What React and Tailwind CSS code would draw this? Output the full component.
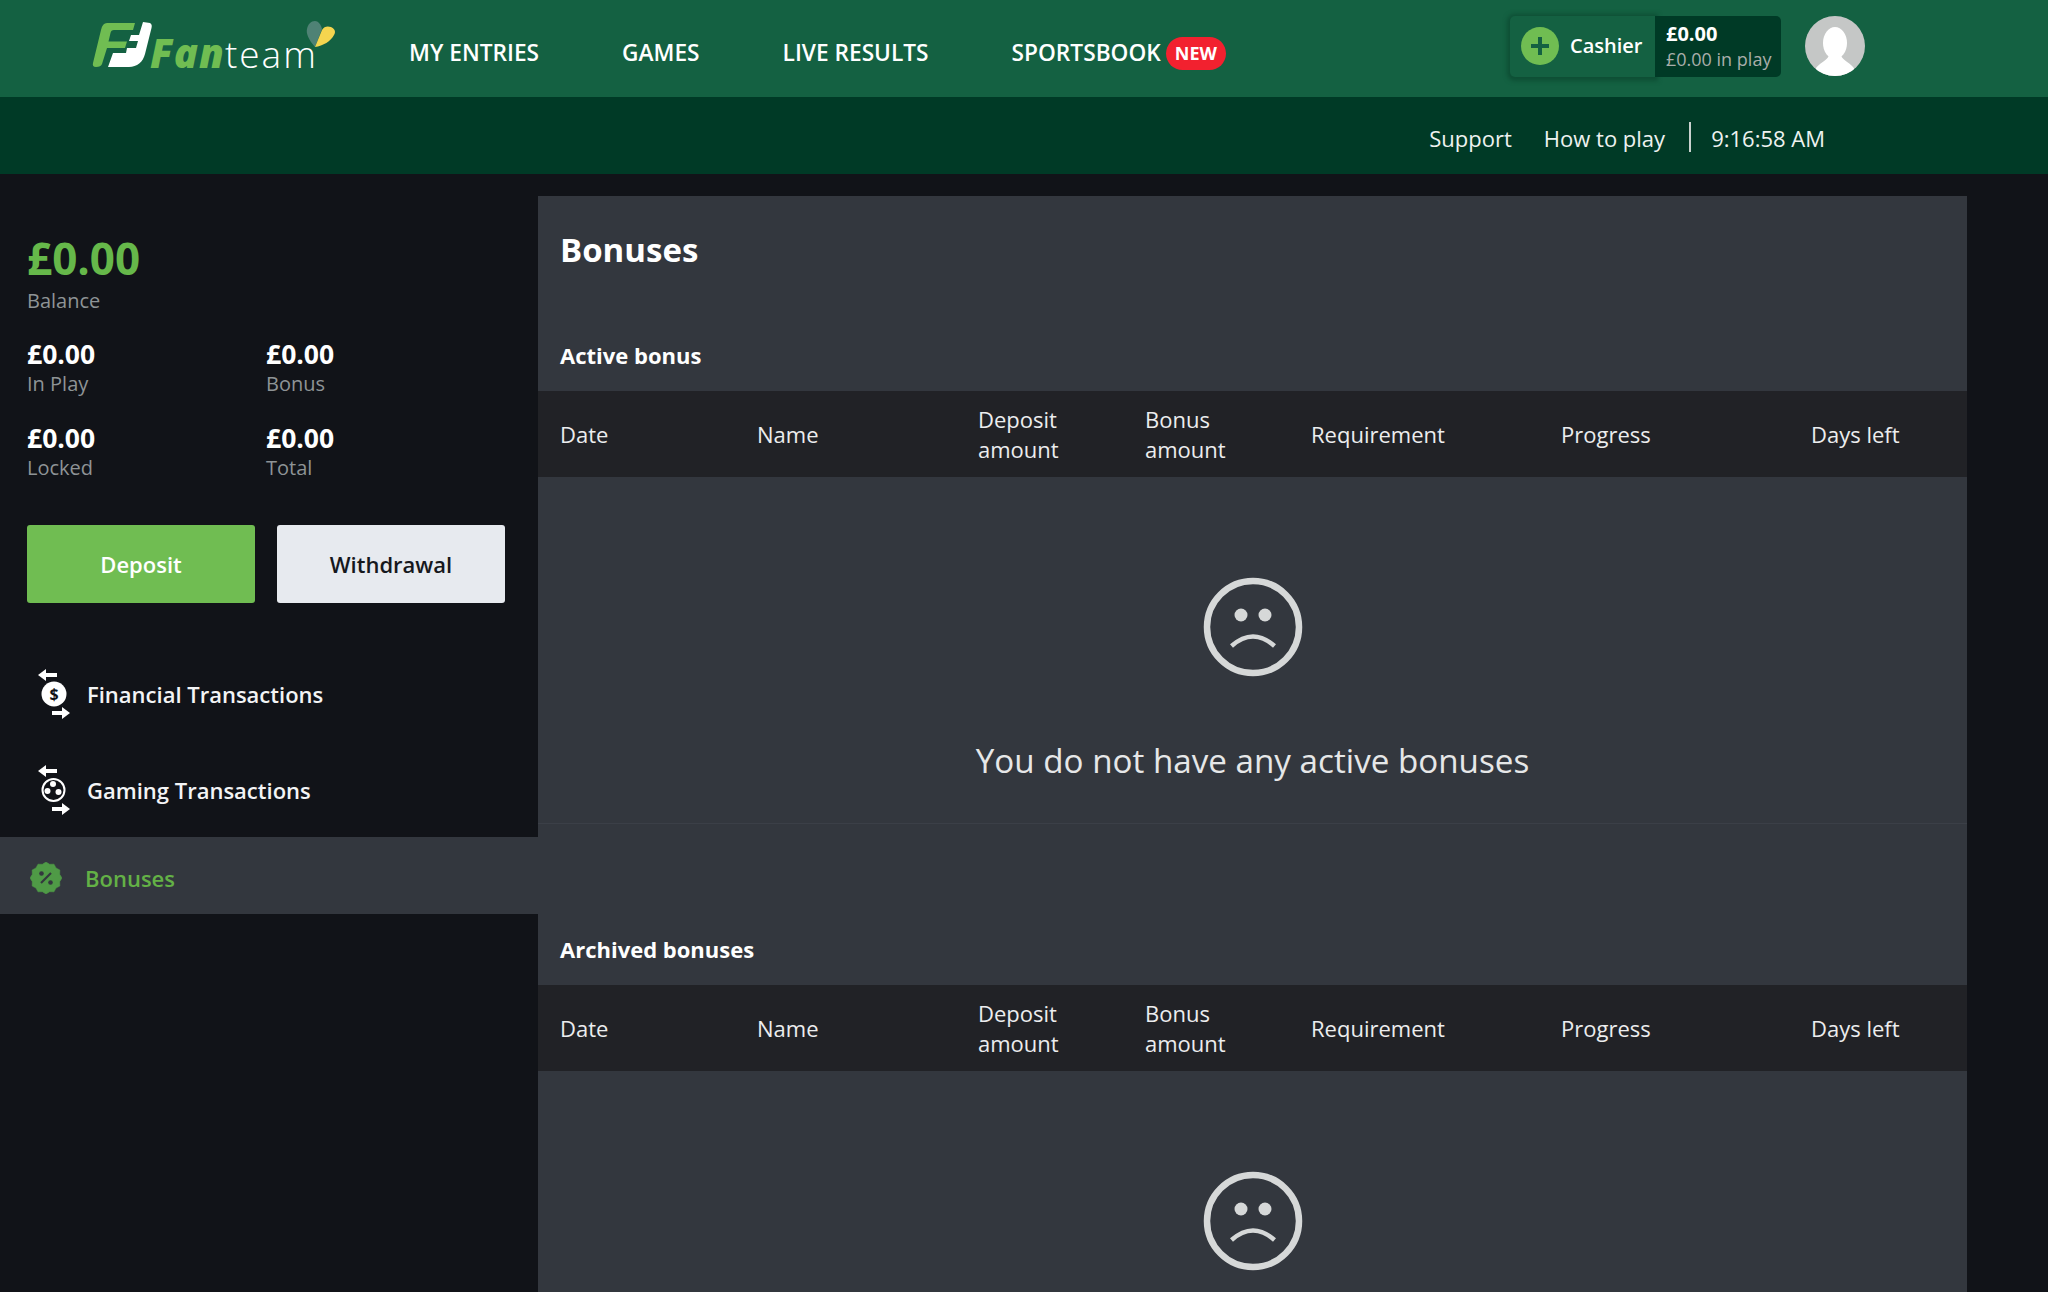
import React from "react";

const COLS = [
  ["Date", "w-[197px]"],
  ["Name", "w-[221px]"],
  ["Deposit amount", "w-[167px]"],
  ["Bonus amount", "w-[166px]"],
  ["Requirement", "w-[250px]"],
  ["Progress", "w-[250px]"],
  ["Days left", "flex-1"],
];

function Logo() {
  return (
    <div className="relative w-[243px] h-[47px] shrink-0">
      <svg className="absolute left-0 top-0" width="243" height="47" viewBox="0 0 243 47">
        <path d="M15 2L43 2L41 9L22 9Q19 9 18.500 12L16.500 20.500L35 20.500L33 27L15 27L10 43Q9 46 4 46Q0 46 1 42L9 9Q10.500 2 15 2Z" fill="#70bd52" />
        <path d="M51 1L58 2C60 3 60 5 59.500 7L53 33C51 41 45 46 37 46L16 46L21 32L34 32L35 27L44 27L46 20L37 20L39 14L47 14Z" fill="#fff" />
        <path d="M223 26C216 18 214 12 215 8C216 3 219 0 223 0C226 0 229 3 230 8Z" fill="#4f8275" />
        <path d="M223 26L230 9C232 5 236 5 239 6C243 8 244 11 242 14C239 20 231 25 223 26Z" fill="#f5d54f" />
      </svg>
      <div className="absolute left-[58px] top-[10px] flex items-baseline leading-[44px]">
        <span className="text-[40px] font-extrabold italic text-[#70bd52] tracking-[1px]">Fan</span>
        <span className="text-[37px] font-light text-white tracking-[2px]">team</span>
      </div>
    </div>
  );
}

function Arrows({ children }) {
  return (
    <svg width="34" height="50" viewBox="0 0 34 50" className="shrink-0">
      <path d="M0 6L8 0V4H19V8H8V12Z" fill="#fff" />
      <path d="M32 44L24 38V42H14V46H24V50Z" fill="#fff" />
      {children}
    </svg>
  );
}

function DollarIcon() {
  return (
    <Arrows>
      <circle cx="16" cy="25" r="12.500" fill="#fff" />
      <text x="16" y="31" textAnchor="middle" fontSize="16" fontWeight="700" fill="#111318" fontFamily="'Open Sans',sans-serif">$</text>
    </Arrows>
  );
}

function BallIcon() {
  return (
    <Arrows>
      <circle cx="15.500" cy="25" r="11" fill="none" stroke="#fff" strokeWidth="2" />
      <circle cx="15" cy="19" r="3" fill="#fff" />
      <circle cx="9.500" cy="26" r="3" fill="#fff" />
      <circle cx="20.500" cy="27" r="3" fill="#fff" />
    </Arrows>
  );
}

function BadgeIcon() {
  const pts = [];
  const n = 24;
  for (let i = 0; i < n; i++) {
    const a = (i / n) * Math.PI * 2;
    const r = i % 2 === 0 ? 16 : 14.2;
    pts.push(`${16 + r * Math.cos(a)},${16 + r * Math.sin(a)}`);
  }
  return (
    <svg width="32" height="32" viewBox="0 0 32 32" className="shrink-0">
      <polygon points={pts.join(" ")} fill="#4f9a46" stroke="#4f9a46" strokeWidth="0.500" strokeLinejoin="round" />
      <path d="M21 11L11 21" stroke="#33373e" strokeWidth="2.200" />
      <circle cx="11.500" cy="11.500" r="2.300" fill="#33373e" />
      <circle cx="20.500" cy="20.500" r="2.300" fill="#33373e" />
    </svg>
  );
}

function SadFace() {
  return (
    <svg width="100" height="100" viewBox="0 0 100 100" className="shrink-0">
      <circle cx="50" cy="50" r="46" fill="none" stroke="#d6d8d8" strokeWidth="6.500" />
      <circle cx="38" cy="38" r="6.500" fill="#d6d8d8" />
      <circle cx="62" cy="38" r="6.500" fill="#d6d8d8" />
      <path d="M28.500 69Q50 50 71.500 69" fill="none" stroke="#d6d8d8" strokeWidth="4.500" />
    </svg>
  );
}

function Stat({ value, label }) {
  return (
    <div className="flex flex-col">
      <span className="text-[26.5px] leading-[33px] font-bold text-white pt-[1px]">{value}</span>
      <span className="text-[20px] leading-[26px] text-[#8e9396]">{label}</span>
    </div>
  );
}

function BonusSection({ title, message }) {
  return (
    <section>
      <h2 className="h-[63px] pl-[22px] pb-[10px] text-[22px] leading-[30px] font-bold text-white flex items-center">{title}</h2>
      <div className="flex items-center h-[86px] pl-[22px] bg-[#212226] text-[22px] leading-[30px] text-[#ecedee]">
        {COLS.map(([name, w]) => (
          <div key={name} className={`${w} shrink-0`}>
            {name.includes(" ") && name !== "Days left" ? (
              <div className="w-[110px]">{name}</div>
            ) : (
              name
            )}
          </div>
        ))}
      </div>
      <div className="h-[347px] flex flex-col items-center pt-[100px] border-b border-[#3b3f47]">
        <SadFace />
        {message && <p className="mt-[62px] text-[33.2px] leading-[44px] text-[#e6e7e8]">{message}</p>}
      </div>
    </section>
  );
}

export default function App() {
  return (
    <div className="h-[1292px] overflow-hidden bg-[#111318] font-['Open_Sans',sans-serif] flex flex-col">
      <header className="h-[97px] shrink-0 bg-[#146142] flex items-center pl-[92px]">
        <div className="-mt-[8px]">
          <Logo />
        </div>
        <nav className="ml-[74px] flex items-center gap-[83px] text-[22.7px] font-semibold text-white uppercase mt-[10px]">
          <a>My Entries</a>
          <a>Games</a>
          <a>Live Results</a>
          <div className="flex items-center gap-[5px]">
            <a>Sportsbook</a>
            <span className="h-[33px] px-[9px] rounded-full bg-[#f2212f] text-[18px] leading-[33px] font-bold">New</span>
          </div>
        </nav>
        <div className="ml-auto mr-[183px] mb-[5px] flex items-center">
          <div className="flex h-[61px] items-stretch rounded-[5px]">
            <div className="w-[145px] flex items-center pl-[11px] gap-[11px] rounded-l-[5px] shadow-[0_1px_4px_3px_#0e4f35]">
              <span className="w-[38px] h-[38px] rounded-full bg-[#70bd52] flex items-center justify-center">
                <svg width="20" height="20" viewBox="0 0 20 20">
                  <path d="M8 1H12V8H19V12H12V19H8V12H1V8H8Z" fill="#146142" />
                </svg>
              </span>
              <span className="text-[20px] font-semibold text-white">Cashier</span>
            </div>
            <div className="relative w-[126px] bg-[#003a26] rounded-r-[5px] pl-[11px] flex flex-col justify-center">
              <span className="text-[20px] leading-[26px] font-bold text-white">£0.00</span>
              <span className="text-[18px] leading-[24px] text-[#a9aeab]">£0.00 in play</span>
            </div>
          </div>
          <div className="ml-[24px] w-[60px] h-[60px] rounded-full bg-[#c5c7c6] overflow-hidden">
            <svg width="60" height="60" viewBox="0 0 60 60">
              <ellipse cx="30" cy="27" rx="12" ry="16" fill="#fff" />
              <path d="M24 38C24 46 10 46 8 60H52C50 46 36 46 36 38Z" fill="#fff" />
            </svg>
          </div>
        </div>
      </header>

      <div className="h-[77px] shrink-0 bg-[#003a26] flex items-center justify-end pr-[223px] pt-[5px] text-[22px] text-[#eef2f0]">
        <a>Support</a>
        <a className="ml-[32px]">How to play</a>
        <span className="ml-[24px] w-[2px] h-[30px] bg-[#c9d2ce] -mt-[3px]"></span>
        <span className="ml-[20px]">9:16:58 AM</span>
      </div>

      <div className="flex flex-1 min-h-0">
        <aside className="w-[538px] shrink-0">
          <div className="pl-[27px] pr-[33px] pt-[55px]">
            <div className="text-[44px] leading-[58px] font-bold text-[#66b84a]">£0.00</div>
            <div className="text-[20px] leading-[27px] text-[#8e9396]">Balance</div>
            <div className="grid grid-cols-[239px_1fr] gap-y-[24px] mt-[23px]">
              <Stat value="£0.00" label="In Play" />
              <Stat value="£0.00" label="Bonus" />
              <Stat value="£0.00" label="Locked" />
              <Stat value="£0.00" label="Total" />
            </div>
            <div className="flex gap-[22px] mt-[44px]">
              <button className="w-[228px] h-[78px] rounded-[3px] bg-[#70bd52] text-white text-[22px] font-semibold">Deposit</button>
              <button className="w-[228px] h-[78px] rounded-[3px] bg-[#e7eaef] text-[#16181d] text-[22px] font-semibold">Withdrawal</button>
            </div>
          </div>
          <ul className="mt-[66px] text-[22px] font-semibold text-[#f3f4f5]">
            <li className="h-[50px] flex items-center pl-[38px] gap-[15px]">
              <DollarIcon />
              <span>Financial Transactions</span>
            </li>
            <li className="h-[50px] mt-[46px] flex items-center pl-[38px] gap-[15px]">
              <BallIcon />
              <span>Gaming Transactions</span>
            </li>
            <li className="h-[77px] mt-[22px] pt-[5px] flex items-center pl-[30px] gap-[23px] bg-[#33373e] text-[#63b146]">
              <BadgeIcon />
              <span>Bonuses</span>
            </li>
          </ul>
        </aside>

        <main className="w-[1429px] mt-[22px] bg-[#33373e] self-stretch">
          <h1 className="pl-[22px] pt-[32px] h-[132px] text-[33px] leading-[44px] font-bold text-white">Bonuses</h1>
          <BonusSection title="Active bonus" message="You do not have any active bonuses" />
          <div className="h-[98px]"></div>
          <BonusSection title="Archived bonuses" />
        </main>
      </div>
    </div>
  );
}
